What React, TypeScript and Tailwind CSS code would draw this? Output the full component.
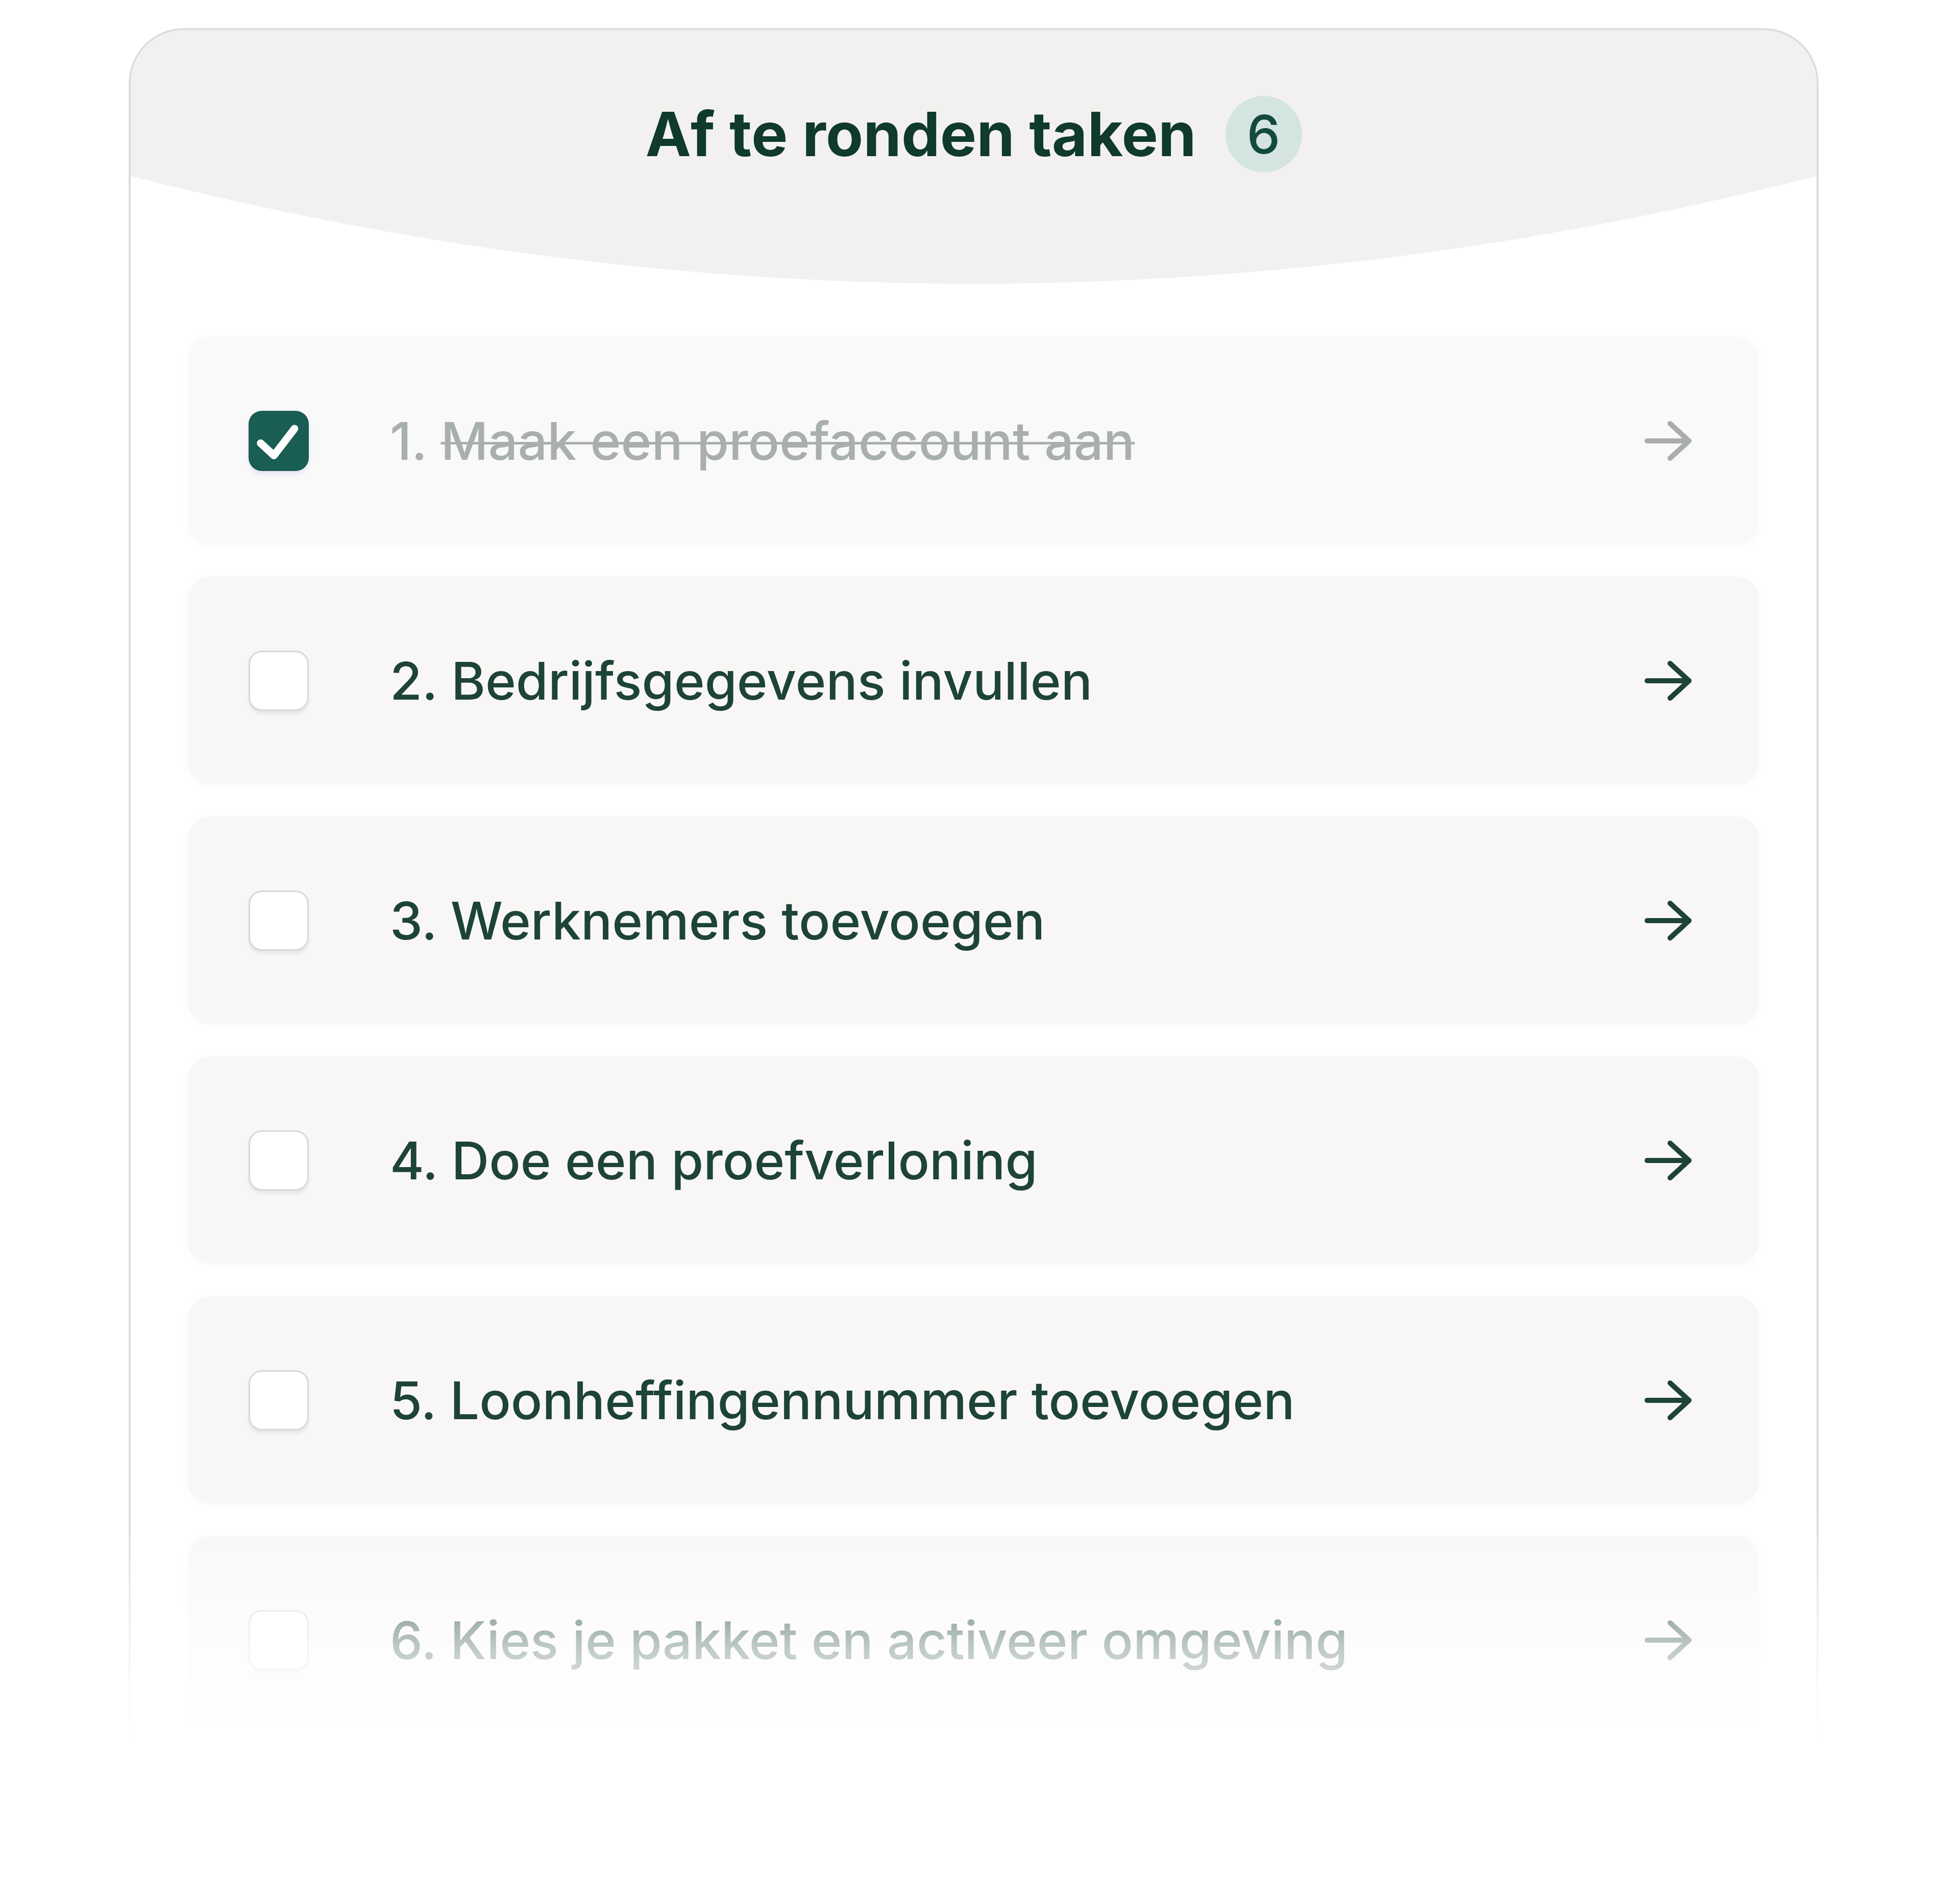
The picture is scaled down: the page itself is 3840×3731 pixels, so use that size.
import React from "react";

type Task = {
    label: string;
    done?: boolean;
};

const tasks: Task[] = [
    { label: "1. Maak een proefaccount aan", done: true },
    { label: "2. Bedrijfsgegevens invullen" },
    { label: "3. Werknemers toevoegen" },
    { label: "4. Doe een proefverloning" },
    { label: "5. Loonheffingennummer toevoegen" },
    { label: "6. Kies je pakket en activeer omgeving" },
];

function Arrow({ done }: { done?: boolean }) {
    return (
        <svg
            viewBox="0 0 100 84"
            className={`h-[84px] w-[100px] shrink-0 ${done ? "text-[#a9adab]" : "text-[#1d4436]"}`}
            fill="none"
            stroke="currentColor"
            strokeWidth={10}
            strokeLinecap="round"
            strokeLinejoin="round"
        >
            <path d="M9 42H91" />
            <path d="M54 8L91 42L54 76" />
        </svg>
    );
}

function Checkbox({ checked }: { checked?: boolean }) {
    if (checked) {
        return (
            <div className="flex h-[118px] w-[118px] shrink-0 items-center justify-center rounded-[26px] bg-[#1a5d54] shadow-[0_6px_10px_rgba(120,90,200,0.12)]">
                <svg viewBox="0 0 24 24" className="h-[118px] w-[118px]" fill="none" stroke="white" strokeWidth={3} strokeLinecap="round" strokeLinejoin="round">
                    <path d="M4.8 12.9L10.1 17.8L18.3 7.1" />
                </svg>
            </div>
        );
    }
    return (
        <div className="h-[118px] w-[118px] shrink-0 rounded-[26px] border-[3px] border-[#d8d8d8] bg-white shadow-[0_6px_6px_rgba(0,0,0,0.07)]" />
    );
}

function TaskRow({ task }: { task: Task }) {
    return (
        <div
            className={`flex h-[408px] items-center rounded-[44px] pl-[118px] pr-[128px] shadow-[0_0_24px_rgba(0,0,0,0.025)] ${
                task.done ? "bg-[#f9f9f9]" : "bg-[#f9f7f5]"
            }`}
        >
            <Checkbox checked={task.done} />
            <span
                className={`ml-[159px] flex-1 text-[102px] font-medium leading-none ${
                    task.done ? "text-[#a9afac]" : "text-[#1d4436]"
                }`}
            >
                {task.done ? (
                    <>
                        1. <span className="line-through decoration-[5px]">Maak een proefaccount aan</span>
                    </>
                ) : (
                    task.label
                )}
            </span>
            <Arrow done={task.done} />
        </div>
    );
}

export default function App() {
    return (
        <div className="h-[3731px] w-full bg-white pt-[55px] font-['Inter','Liberation_Sans',sans-serif]">
            <section className="ml-[252px] w-[3311px] overflow-hidden rounded-t-[108px] border-4 border-b-0 border-[#dcdcdc] bg-white [mask-image:linear-gradient(to_bottom,black_2905px,rgba(0,0,0,0.28)_3177px,transparent_3365px)]">
                <header className="bg-[#f3f1ef] pt-[129px] pb-[7px]">
                    <div className="flex items-center justify-center gap-[57px]">
                        <h1 className="text-[120px] font-bold leading-none text-[#0f3a2d]">
                            Af te ronden taken
                        </h1>
                        <span className="flex h-[150px] w-[150px] items-center justify-center rounded-full bg-[#d4e4e1] text-[104px] font-medium leading-none text-[#144a3e]">
                            6
                        </span>
                    </div>
                </header>
                <svg viewBox="0 0 1000 211" preserveAspectRatio="none" className="block h-[211px] w-full">
                    <path d="M0 0H1000Q500 422 0 0Z" fill="#f3f1ef" />
                </svg>
                <div className="mt-[104px] flex flex-col gap-[62px] px-[113px]">
                    {tasks.map((task) => (
                        <TaskRow key={task.label} task={task} />
                    ))}
                </div>
            </section>
        </div>
    );
}
